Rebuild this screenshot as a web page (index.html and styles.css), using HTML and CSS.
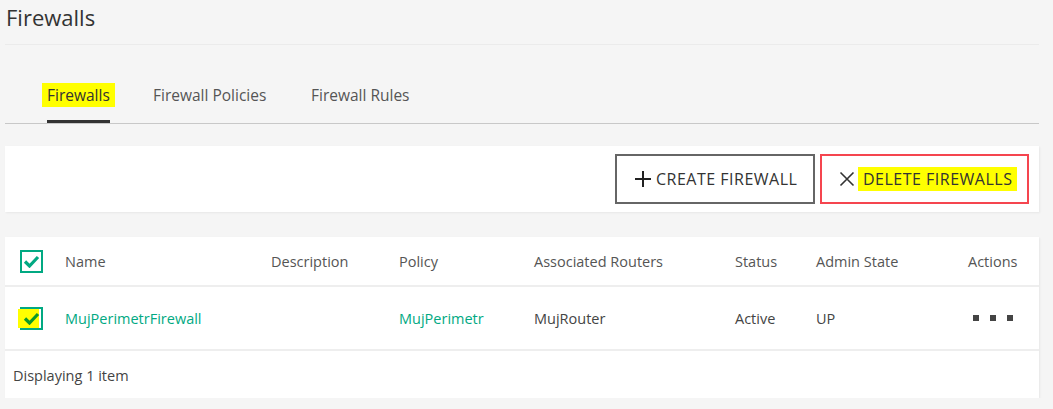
FILE: index.html
```html
<!doctype html>
<html lang="en">
  <head>
    <meta charset="UTF-8" />
    <title>Firewalls</title>
    <link rel="stylesheet" href="styles.css">
  </head>
  <body>
    <div class="page">
      <h1 class="title">Firewalls</h1>

      <nav class="tabs">
        <a class="tab active"><span class="mark">Firewalls</span></a>
        <a class="tab">Firewall Policies</a>
        <a class="tab">Firewall Rules</a>
      </nav>

      <div class="toolbar">
        <button class="btn create">
          <svg width="18" height="18" viewBox="0 0 18 18"><path d="M9 1v16M1 9h16" stroke="#222" stroke-width="2" fill="none"/></svg>
          CREATE FIREWALL
        </button>
        <button class="btn delete">
          <svg width="16" height="16" viewBox="0 0 16 16"><path d="M1.5 1.5l13 13M14.5 1.5l-13 13" stroke="#333" stroke-width="1.6" fill="none"/></svg>
          <span class="mark">DELETE FIREWALLS</span>
        </button>
      </div>

      <div class="table-panel">
        <table class="grid">
          <thead>
            <tr>
              <th class="c-check"><span class="check"><svg width="17" height="13" viewBox="0 0 17 13"><path d="M2 6.5l4.5 4.5L15 2" stroke="#01a982" stroke-width="3.2" fill="none"/></svg></span></th>
              <th class="c-name">Name</th>
              <th class="c-desc">Description</th>
              <th class="c-policy">Policy</th>
              <th class="c-routers">Associated Routers</th>
              <th class="c-status">Status</th>
              <th class="c-admin">Admin State</th>
              <th class="c-actions">Actions</th>
            </tr>
          </thead>
          <tbody>
            <tr>
              <td class="c-check"><span class="check hl"><svg width="17" height="13" viewBox="0 0 17 13"><path d="M2 6.5l4.5 4.5L15 2" stroke="#0a9a2a" stroke-width="3.2" fill="none"/></svg></span></td>
              <td class="link">MujPerimetrFirewall</td>
              <td></td>
              <td class="link">MujPerimetr</td>
              <td>MujRouter</td>
              <td>Active</td>
              <td>UP</td>
              <td class="c-actions"><span class="dots"><i></i><i></i><i></i></span></td>
            </tr>
          </tbody>
        </table>
        <div class="footer">Displaying 1 item</div>
      </div>
    </div>
  </body>
</html>
```

FILE: styles.css
```css
body {
  margin: 0;
  background: #f5f5f5;
  font-family: "Open Sans", sans-serif;
  color: #444;
}
.page {
  width: 1034px;
  padding-left: 5px;
}
.title {
  margin: 0;
  padding: 2px 0 0 1px;
  height: 42px;
  font-size: 22px;
  font-weight: normal;
  color: #333;
  border-bottom: 1px solid #ebebeb;
}
.tabs {
  display: flex;
  margin-top: 39px;
  padding-left: 37px;
  border-bottom: 1px solid #c8c8c8;
  height: 39px;
}
.tab {
  font-size: 15.5px;
  color: #555;
  cursor: pointer;
}
.tab:nth-child(1) { width: 111px; }
.tab:nth-child(2) { width: 158px; }
.tab.active {
  color: #333;
  position: relative;
}
.tab.active::after {
  content: "";
  position: absolute;
  left: 5px;
  width: 63px;
  bottom: 0;
  height: 3px;
  background: #333;
}
.mark {
  background: #ffff00;
  padding: 1px 5px;
}
.toolbar {
  margin-top: 22px;
  background: #fff;
  height: 66px;
  display: flex;
  justify-content: flex-end;
  align-items: center;
  gap: 5px;
  padding-right: 10px;
  box-shadow: 1px 1px 2px rgba(0, 0, 0, 0.06);
}
.btn {
  height: 50px;
  background: #fff;
  font-family: inherit;
  font-size: 16px;
  letter-spacing: 0.5px;
  color: #333;
  display: flex;
  align-items: center;
  gap: 4px;
  cursor: pointer;
}
.btn.create {
  width: 200px;
  border: 2px solid #666;
  padding-left: 17px;
}
.btn.delete {
  width: 209px;
  border: 2px solid #f5454f;
  padding-left: 17px;
  gap: 3px;
}
.table-panel {
  margin-top: 25px;
  background: #fff;
  box-shadow: 1px 1px 2px rgba(0, 0, 0, 0.06);
}
.grid {
  width: 100%;
  table-layout: fixed;
  border-collapse: collapse;
  font-size: 14.5px;
}
.grid th {
  font-weight: normal;
  text-align: left;
  color: #555;
  height: 48px;
  padding: 0;
  border-bottom: 2px solid #eee;
}
.grid td {
  height: 62px;
  padding: 0;
  border-bottom: 2px solid #eee;
  color: #444;
}
.grid .c-check { width: 45px; padding-left: 15px; }
.c-name { width: 206px; }
.c-desc { width: 128px; }
.c-policy { width: 135px; }
.c-routers { width: 201px; }
.c-status { width: 81px; }
.c-admin { width: 152px; }
.grid td.link {
  color: #01a982;
}
.check {
  display: inline-flex;
  align-items: center;
  justify-content: center;
  width: 19px;
  height: 19px;
  border: 2px solid #01a982;
  vertical-align: middle;
  position: relative;
}
.check svg {
  position: relative;
}
.check.hl::before {
  content: "";
  position: absolute;
  left: -4px;
  top: 0;
  width: 21px;
  height: 19px;
  background: #ffff00;
}
.dots {
  display: inline-flex;
  gap: 11px;
  margin-left: 5px;
  vertical-align: 3px;
}
.dots i {
  width: 6px;
  height: 6px;
  background: #444;
}
.footer {
  height: 47px;
  line-height: 50px;
  padding-left: 8px;
  font-size: 14.5px;
  color: #444;
}
```
